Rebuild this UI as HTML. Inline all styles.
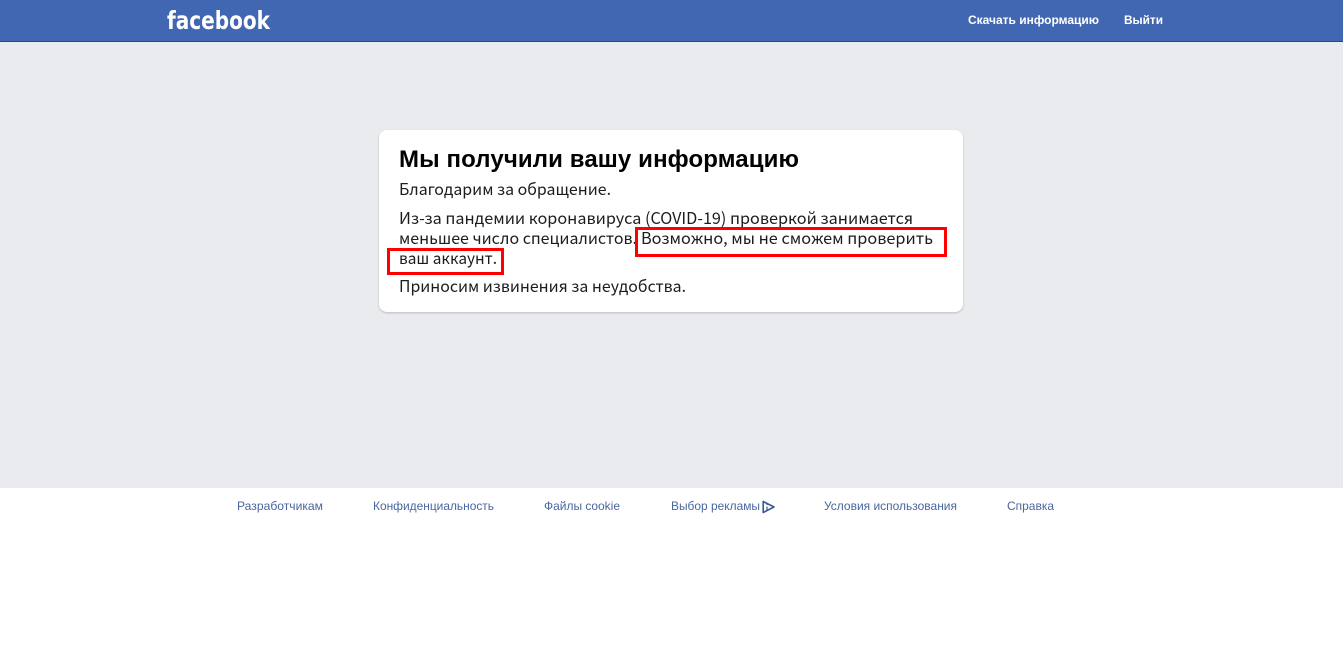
<!DOCTYPE html>
<html lang="ru">
<head>
<meta charset="utf-8">
<title>Facebook</title>
<style>
html,body{margin:0;padding:0;width:1343px;height:652px;overflow:hidden;background:#fff}
.bg{position:absolute;left:0;top:0;width:1343px;height:488px;background:#e9ebee}
.head{position:absolute;left:0;top:0;width:1343px;height:41px;background:#4267b2;border-bottom:1px solid #29487d}
.card{position:absolute;left:379px;top:130px;width:584px;height:182px;background:#fff;border-radius:8px;box-shadow:0 1px 2px rgba(0,0,0,.2)}
svg{position:absolute;left:0;top:0}
.b{font-family:"Noto Sans CJK SC","Liberation Sans",sans-serif;font-size:16px;fill:#1c1c1c}
.h{font-family:"Liberation Sans",sans-serif;font-size:24px;font-weight:700;fill:#000}
.n{font-family:"Liberation Sans",sans-serif;font-size:12px;font-weight:700;fill:#fff}
.f{font-family:"Liberation Sans",sans-serif;font-size:12px;fill:#4a66a0}
.l{font-family:"DejaVu Sans",sans-serif;font-size:25px;font-weight:700;fill:#fff}
</style>
</head>
<body>
<div class="bg"></div>
<div class="head"></div>
<div class="card"></div>
<svg width="1343" height="652" viewBox="0 0 1343 652">
<text class="l" x="167" y="29" textLength="103" lengthAdjust="spacingAndGlyphs">facebook</text>
<text class="n" x="968" y="24" textLength="131" lengthAdjust="spacingAndGlyphs">Скачать информацию</text>
<text class="n" x="1124" y="24" textLength="39" lengthAdjust="spacingAndGlyphs">Выйти</text>

<text class="h" x="399" y="167" textLength="400" lengthAdjust="spacing">Мы получили вашу информацию</text>
<text class="b" x="399" y="195" textLength="212" lengthAdjust="spacingAndGlyphs">Благодарим за обращение.</text>
<text class="b" x="399" y="224" textLength="514" lengthAdjust="spacingAndGlyphs">Из-за пандемии коронавируса (COVID-19) проверкой занимается</text>
<text class="b" x="399" y="244" textLength="238" lengthAdjust="spacingAndGlyphs">меньшее число специалистов.</text>
<text class="b" x="641" y="244" textLength="292" lengthAdjust="spacingAndGlyphs">Возможно, мы не сможем проверить</text>
<text class="b" x="399" y="264" textLength="98" lengthAdjust="spacingAndGlyphs">ваш аккаунт.</text>
<text class="b" x="399" y="292" textLength="287" lengthAdjust="spacingAndGlyphs">Приносим извинения за неудобства.</text>

<rect x="636.5" y="228.5" width="309" height="27" fill="none" stroke="#f00" stroke-width="3"/>
<rect x="388.5" y="249.5" width="114" height="24" fill="none" stroke="#f00" stroke-width="3"/>

<text class="f" x="237" y="510" textLength="86" lengthAdjust="spacingAndGlyphs">Разработчикам</text>
<text class="f" x="373" y="510" textLength="121" lengthAdjust="spacingAndGlyphs">Конфиденциальность</text>
<text class="f" x="544" y="510" textLength="76" lengthAdjust="spacingAndGlyphs">Файлы cookie</text>
<text class="f" x="671" y="510" textLength="89" lengthAdjust="spacingAndGlyphs">Выбор рекламы</text>
<path d="M763.2 501.5V512.5L774 507L763.2 501.5Z" fill="none" stroke="#3b5998" stroke-width="1.6" stroke-linejoin="round"/>
<path d="M767 506.5V510.5M767 504V505" fill="none" stroke="#3b5998" stroke-width="1.2"/>
<text class="f" x="824" y="510" textLength="133" lengthAdjust="spacingAndGlyphs">Условия использования</text>
<text class="f" x="1007" y="510" textLength="47" lengthAdjust="spacingAndGlyphs">Справка</text>
</svg>
</body>
</html>
